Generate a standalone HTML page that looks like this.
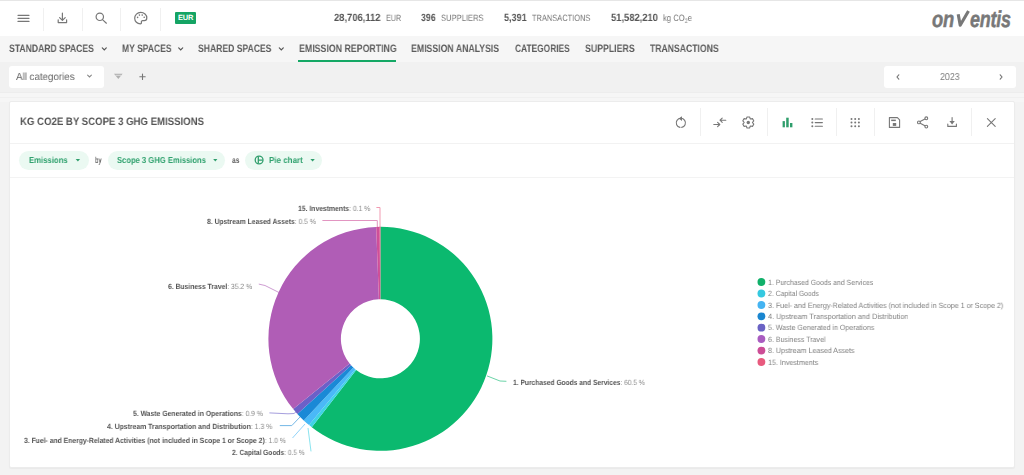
<!DOCTYPE html>
<html><head><meta charset="utf-8">
<style>
*{margin:0;padding:0;box-sizing:border-box}
html,body{width:1024px;height:475px;overflow:hidden;background:#f3f3f3;font-family:"Liberation Sans",sans-serif;text-rendering:geometricPrecision}
.a{position:absolute}
.t{position:absolute;white-space:nowrap;line-height:1;transform-origin:0 0;will-change:transform}
.t b{font-weight:bold}
svg{position:absolute;left:0;top:0}
</style></head><body>
<!-- top bar -->
<div class="a" style="left:0;top:0;width:1024px;height:1px;background:#e6e6e6"></div>
<div class="a" style="left:0;top:1px;width:1024px;height:35px;background:#fff"></div>
<!-- nav bar -->
<div class="a" style="left:0;top:36px;width:1024px;height:26px;background:#f6f6f6"></div>
<div class="a" style="left:298px;top:60px;width:98px;height:2px;background:#14a865"></div>
<!-- filter bar -->
<div class="a" style="left:0;top:62px;width:1024px;height:30px;background:#f1f1f1"></div>
<div class="a" style="left:0;top:91.5px;width:1024px;height:1px;background:#ededed"></div>
<div class="a" style="left:0;top:92.5px;width:1024px;height:10px;background:#f6f6f6"></div>
<div class="a" style="left:0;top:96.5px;width:1024px;height:1px;background:#f0f0f0"></div>
<div class="a" style="left:8.5px;top:66px;width:95px;height:22px;background:#fff;border-radius:3px"></div>
<div class="a" style="left:884px;top:66px;width:132px;height:22px;background:#fff;border-radius:3px"></div>
<!-- card -->
<div class="a" style="left:0;top:102px;width:1024px;height:373px;background:#f3f3f3"></div>
<div class="a" style="left:9px;top:101px;width:1006px;height:367px;background:#fff;border:1px solid #ececec;border-radius:2px;box-shadow:0 1px 1px rgba(0,0,0,0.04)"></div>
<div class="a" style="left:10px;top:143px;width:1004px;height:1px;background:#f2f2f2"></div>
<div class="a" style="left:10px;top:177px;width:1004px;height:1px;background:#f3f3f3"></div>
<!-- EUR badge -->
<div class="a" style="left:175px;top:12px;width:21px;height:12px;background:#15a464;border-radius:1px;color:#fff;font-size:7.5px;font-weight:bold;line-height:12px;text-align:center;letter-spacing:-0.2px">EUR</div>
<!-- pills -->
<div class="a" style="left:18.7px;top:150.5px;width:70.3px;height:19.5px;border-radius:10px;background:#ebf9f2"></div>
<div class="a" style="left:107.6px;top:150.5px;width:117.8px;height:19.5px;border-radius:10px;background:#ebf9f2"></div>
<div class="a" style="left:245.4px;top:150.5px;width:76.8px;height:19.5px;border-radius:10px;background:#ebf9f2"></div>
<svg width="1024" height="475" viewBox="0 0 1024 475">
<g id="topicons" fill="none" stroke="#777" stroke-width="1.2" stroke-linecap="round">
 <!-- hamburger -->
 <path d="M18 15.3H29M18 18.3H29M18 21.4H29"/>
 <!-- download -->
 <path d="M62.4 13.2V20.2M59.6 17.6L62.4 20.4L65.2 17.6M58.2 19.8V22.6H66.6V19.8" stroke-linejoin="round"/>
 <!-- search -->
 <circle cx="99.8" cy="16.8" r="3.7"/><path d="M102.5 19.6L106.4 23.2"/>
 <!-- palette -->
 <path d="M140.7 12.4C137.3 12.4 134.7 15 134.7 18.2C134.7 21.4 137.3 23.8 140.3 23.8C141.3 23.8 141.6 23.2 141.4 22.5C141.1 21.6 141.6 20.6 142.7 20.6H144.3C145.8 20.6 146.8 19.6 146.8 18C146.8 14.9 144.1 12.4 140.7 12.4Z"/>
</g>
<g fill="#777">
 <circle cx="137.6" cy="17.4" r="0.8"/><circle cx="139.4" cy="15.1" r="0.8"/><circle cx="142.2" cy="15.1" r="0.8"/><circle cx="144.2" cy="17.2" r="0.8"/>
</g>
<g stroke="#f0f0f0" stroke-width="1">
 <path d="M43.5 8V31M82.5 8V31M120.5 8V31M160.5 8V31"/>
 <path d="M700.5 108V136M767.5 108V136M836.5 108V136M874.5 108V136M971.5 108V136"/>
</g>
<!-- nav chevrons -->
<g fill="none" stroke="#666" stroke-width="1" stroke-linecap="round">
 <path d="M102.3 47.8L104.3 49.8L106.3 47.8M178.7 47.8L180.7 49.8L182.7 47.8M279.3 47.8L281.3 49.8L283.3 47.8" stroke-width="1.2" stroke="#555"/>
 <path d="M87.6 75.2L89.5 77L91.4 75.2" stroke="#888" stroke-width="1.1"/>
 <path d="M898.8 74.8L897 77L898.8 79.2M1000.2 74.8L1002 77L1000.2 79.2" stroke="#777" stroke-width="1.1"/>
 <path d="M142.5 74V79.4M139.8 76.7H145.2" stroke="#777" stroke-width="1.1"/>
</g>
<path d="M114 73.8H122.6L118.3 79Z" fill="#b0b0b0"/>
<path d="M115.5 75.3H121.1" stroke="#fff" stroke-width="0.6"/>
<!-- pill carets -->
<g fill="#2f9e6c">
 <path d="M75.7 159H80.1L77.9 161.4Z"/>
 <path d="M213.2 159H217.4L215.3 161.4Z"/>
 <path d="M310.4 159H314.8L312.6 161.4Z"/>
</g>
<g fill="none" stroke="#2f9e6c" stroke-width="1.3">
 <circle cx="259.1" cy="160" r="3.9"/>
 <path d="M258.3 156.6V163.3M258.3 160.1H262.7"/>
</g>
<!-- card toolbar icons -->
<g fill="none" stroke="#777" stroke-width="1.1" stroke-linecap="round" stroke-linejoin="round">
 <!-- refresh -->
 <path d="M680 127.4A4.6 4.6 0 1 1 681.7 127.4"/>
 <!-- compress arrows -->
 <path d="M713.8 124.5H719.6M717.6 122.4L719.8 124.5L717.6 126.6"/>
 <path d="M725.8 120.2H720.2M722.2 118.1L720 120.2L722.2 122.3"/>
 <!-- gear -->
 <path d="M746.25 118.95L747.02 116.95L749.58 116.95L750.35 118.95L752.47 118.61L753.75 120.83L752.40 122.50L753.75 124.17L752.47 126.39L750.35 126.05L749.58 128.05L747.02 128.05L746.25 126.05L744.13 126.39L742.85 124.17L744.20 122.50L742.85 120.83L744.13 118.61Z"/>
 <!-- list -->
 <path d="M815.2 119H822.4M815.2 122.6H822.4M815.2 126.2H822.4"/>
 <!-- save -->
 <path d="M889.4 117.6H897.4L899.6 119.8V127.4H889.4Z"/>

 <!-- share -->
 <path d="M920.2 121.6L924.9 119.1M920.2 123.3L924.9 125.8"/>
 <circle cx="918.9" cy="122.4" r="1.4"/><circle cx="926.3" cy="118.3" r="1.4"/><circle cx="926.3" cy="126.6" r="1.4"/>
 <!-- download -->
 <path d="M952.1 117.6V122M947.8 124V126.4H956.4V124"/>
 <!-- close -->
 <path d="M987.4 118.6L995.2 126.4M995.2 118.6L987.4 126.4"/>
</g>
<g fill="#777">
 <circle cx="686.4" cy="120.6" r="0"/>
 <circle cx="748.3" cy="122.5" r="1.7"/><path d="M682 116.3V120.9L678.7 118.6Z"/>
 <path d="M949.4 121H954.8L952.1 124.6Z"/><rect x="891.2" y="119.6" width="4.6" height="1.5"/><rect x="892.8" y="123" width="3.4" height="2.9"/>
 
 <circle cx="812.3" cy="119" r="1"/><circle cx="812.3" cy="122.6" r="1"/><circle cx="812.3" cy="126.2" r="1"/>
 <circle cx="851.5" cy="119" r="1"/><circle cx="855.2" cy="119" r="1"/><circle cx="858.9" cy="119" r="1"/>
 <circle cx="851.5" cy="122.6" r="1"/><circle cx="855.2" cy="122.6" r="1"/><circle cx="858.9" cy="122.6" r="1"/>
 <circle cx="851.5" cy="126.2" r="1"/><circle cx="855.2" cy="126.2" r="1"/><circle cx="858.9" cy="126.2" r="1"/>
</g>
<g fill="#2f9e6c">
 <rect x="782.6" y="121.1" width="2.3" height="6.2"/>
 <rect x="786.2" y="117.7" width="2.5" height="9.6"/>
 <rect x="790" y="123" width="2.4" height="4.3"/>
</g>
<!-- donut -->
<g>
<path d="M380.40 226.80A112.0 112.0 0 1 1 311.75 427.30L356.19 370.01A39.5 39.5 0 1 0 380.40 299.30Z" fill="#0bb96f"/>
<path d="M311.75 427.30A112.0 112.0 0 0 1 309.01 425.10L355.22 369.24A39.5 39.5 0 0 0 356.19 370.01Z" fill="#3fd3e6"/>
<path d="M309.01 425.10A112.0 112.0 0 0 1 303.73 420.44L353.36 367.59A39.5 39.5 0 0 0 355.22 369.24Z" fill="#4ab9f7"/>
<path d="M303.73 420.44A112.0 112.0 0 0 1 297.32 413.92L351.10 365.29A39.5 39.5 0 0 0 353.36 367.59Z" fill="#1a89d6"/>
<path d="M297.32 413.92A112.0 112.0 0 0 1 293.21 409.10L349.65 363.59A39.5 39.5 0 0 0 351.10 365.29Z" fill="#6c60c8"/>
<path d="M293.21 409.10A112.0 112.0 0 0 1 376.18 226.88L378.91 299.33A39.5 39.5 0 0 0 349.65 363.59Z" fill="#b05db6"/>
<path d="M376.18 226.88A112.0 112.0 0 0 1 379.70 226.80L380.15 299.30A39.5 39.5 0 0 0 378.91 299.33Z" fill="#cf4f98"/>
<path d="M379.70 226.80A112.0 112.0 0 0 1 380.40 226.80L380.40 299.30A39.5 39.5 0 0 0 380.15 299.30Z" fill="#ea5a80"/>
</g>
<g opacity="0.6">
<polyline points="376.4,207.5 380,207.5 380,228" fill="none" stroke="#ea5a80" stroke-width="1"/>
<polyline points="322.4,220.5 377.3,220.5 377.3,228" fill="none" stroke="#cf4f98" stroke-width="1"/>
<polyline points="258.8,284.1 265,285.5 279,292.5" fill="none" stroke="#b05db6" stroke-width="1"/>
<polyline points="269.4,412.9 288,413.8 294,413.5 297,411" fill="none" stroke="#6c60c8" stroke-width="1"/>
<polyline points="279.8,425.6 291.8,425.6 300,417" fill="none" stroke="#1a89d6" stroke-width="1"/>
<polyline points="292.5,438 305,424" fill="none" stroke="#4ab9f7" stroke-width="1"/>
<polyline points="311,451.4 308,428" fill="none" stroke="#3fd3e6" stroke-width="1"/>
<polyline points="506.4,381.3 500,381 487,375.9" fill="none" stroke="#0bb96f" stroke-width="1"/>
</g>
<!-- legend markers -->
<g>
<circle cx="761.4" cy="282.0" r="3.9" fill="#10b06a"/>
<circle cx="761.4" cy="293.5" r="3.9" fill="#35c9e0"/>
<circle cx="761.4" cy="305.0" r="3.9" fill="#45b4f2"/>
<circle cx="761.4" cy="316.3" r="3.9" fill="#1a86d0"/>
<circle cx="761.4" cy="327.7" r="3.9" fill="#6a62c4"/>
<circle cx="761.4" cy="339.0" r="3.9" fill="#a95cc0"/>
<circle cx="761.4" cy="350.6" r="3.9" fill="#cc4d96"/>
<circle cx="761.4" cy="362.0" r="3.9" fill="#e85a7e"/>
</g>
</svg>
<!-- logo -->
<div class="a" style="white-space:nowrap;line-height:1;left:932.2px;top:7.8px;font-size:23px;font-weight:bold;font-style:italic;color:#787878;letter-spacing:-0.3px;transform:scaleX(0.80);transform-origin:0 0;-webkit-text-stroke:0.5px #787878">on</div>
<div class="a" style="white-space:nowrap;line-height:1;left:970.2px;top:7.8px;font-size:23px;font-weight:bold;font-style:italic;color:#787878;letter-spacing:-0.3px;transform:scaleX(0.78);transform-origin:0 0;-webkit-text-stroke:0.5px #787878">entis</div>
<svg width="1024" height="40" style="position:absolute;left:0;top:0"><path d="M958.2 14.2L960.2 25.3L968.5 11.0" fill="none" stroke="#787878" stroke-width="3.1" stroke-linejoin="round" stroke-linecap="butt"/></svg>
<div id="t0" class="t" style="left:333.60px;top:14.10px;font-size:10.47px;font-weight:bold;color:#555;transform:scaleX(0.8953);">28,706,112</div>
<div id="t1" class="t" style="left:385.60px;top:14.10px;font-size:9.16px;font-weight:normal;color:#777;transform:scaleX(0.7858);">EUR</div>
<div id="t2" class="t" style="left:421.00px;top:14.10px;font-size:10.47px;font-weight:bold;color:#555;transform:scaleX(0.8358);">396</div>
<div id="t3" class="t" style="left:441.00px;top:14.10px;font-size:9.16px;font-weight:normal;color:#777;transform:scaleX(0.8287);">SUPPLIERS</div>
<div id="t4" class="t" style="left:503.60px;top:14.10px;font-size:10.47px;font-weight:bold;color:#555;transform:scaleX(0.8625);">5,391</div>
<div id="t5" class="t" style="left:532.30px;top:14.10px;font-size:9.16px;font-weight:normal;color:#777;transform:scaleX(0.8141);">TRANSACTIONS</div>
<div id="t6" class="t" style="left:610.50px;top:14.10px;font-size:10.47px;font-weight:bold;color:#555;transform:scaleX(0.8949);">51,582,210</div>
<div id="t7" class="t" style="left:662.80px;top:14.10px;font-size:9.16px;font-weight:normal;color:#777;transform:scaleX(0.8375);">kg CO<span style="font-size:70%;vertical-align:-2px">2</span>e</div>
<div id="t8" class="t" style="left:9.40px;top:43.60px;font-size:10.76px;font-weight:bold;color:#5c5c5c;transform:scaleX(0.8015);">STANDARD SPACES</div>
<div id="t9" class="t" style="left:121.50px;top:43.60px;font-size:10.76px;font-weight:bold;color:#5c5c5c;transform:scaleX(0.7942);">MY SPACES</div>
<div id="t10" class="t" style="left:197.90px;top:43.60px;font-size:10.76px;font-weight:bold;color:#5c5c5c;transform:scaleX(0.7996);">SHARED SPACES</div>
<div id="t11" class="t" style="left:298.50px;top:43.60px;font-size:10.76px;font-weight:bold;color:#5c5c5c;transform:scaleX(0.8186);">EMISSION REPORTING</div>
<div id="t12" class="t" style="left:411.30px;top:43.60px;font-size:10.76px;font-weight:bold;color:#5c5c5c;transform:scaleX(0.8117);">EMISSION ANALYSIS</div>
<div id="t13" class="t" style="left:515.00px;top:43.60px;font-size:10.76px;font-weight:bold;color:#5c5c5c;transform:scaleX(0.7783);">CATEGORIES</div>
<div id="t14" class="t" style="left:584.80px;top:43.60px;font-size:10.76px;font-weight:bold;color:#5c5c5c;transform:scaleX(0.8156);">SUPPLIERS</div>
<div id="t15" class="t" style="left:650.00px;top:43.60px;font-size:10.76px;font-weight:bold;color:#5c5c5c;transform:scaleX(0.8044);">TRANSACTIONS</div>
<div id="t16" class="t" style="left:16.40px;top:72.90px;font-size:10.32px;font-weight:normal;color:#666;transform:scaleX(0.9466);">All categories</div>
<div id="t17" class="t" style="left:939.80px;top:72.70px;font-size:10.03px;font-weight:normal;color:#7a7a7a;transform:scaleX(0.8797);">2023</div>
<div id="t18" class="t" style="left:19.80px;top:117.10px;font-size:10.76px;font-weight:bold;color:#555;transform:scaleX(0.8936);">KG CO2E BY SCOPE 3 GHG EMISSIONS</div>
<div id="t19" class="t" style="left:29.20px;top:156.00px;font-size:8.72px;font-weight:bold;color:#31a26f;transform:scaleX(0.8871);">Emissions</div>
<div id="t20" class="t" style="left:95.10px;top:156.00px;font-size:8.72px;font-weight:bold;color:#666;transform:scaleX(0.6479);">by</div>
<div id="t21" class="t" style="left:116.80px;top:156.00px;font-size:8.72px;font-weight:bold;color:#31a26f;transform:scaleX(0.8736);">Scope 3 GHG Emissions</div>
<div id="t22" class="t" style="left:232.00px;top:156.00px;font-size:8.72px;font-weight:bold;color:#666;transform:scaleX(0.7729);">as</div>
<div id="t23" class="t" style="left:268.50px;top:156.00px;font-size:8.72px;font-weight:bold;color:#31a26f;transform:scaleX(0.9174);">Pie chart</div>
<div id="t24" class="t" style="left:298.00px;top:205.40px;font-size:7.60px;font-weight:normal;color:#555;transform:scaleX(0.8967);"><b>15. Investments</b><span style="color:#8a8a8a">: 0.1 %</span></div>
<div id="t25" class="t" style="left:207.00px;top:218.10px;font-size:7.60px;font-weight:normal;color:#555;transform:scaleX(0.8908);"><b>8. Upstream Leased Assets</b><span style="color:#8a8a8a">: 0.5 %</span></div>
<div id="t26" class="t" style="left:167.60px;top:282.70px;font-size:7.60px;font-weight:normal;color:#555;transform:scaleX(0.8932);"><b>6. Business Travel</b><span style="color:#8a8a8a">: 35.2 %</span></div>
<div id="t27" class="t" style="left:132.70px;top:410.00px;font-size:7.60px;font-weight:normal;color:#555;transform:scaleX(0.8964);"><b>5. Waste Generated in Operations</b><span style="color:#8a8a8a">: 0.9 %</span></div>
<div id="t28" class="t" style="left:107.10px;top:422.90px;font-size:7.60px;font-weight:normal;color:#555;transform:scaleX(0.9041);"><b>4. Upstream Transportation and Distribution</b><span style="color:#8a8a8a">: 1.3 %</span></div>
<div id="t29" class="t" style="left:24.40px;top:436.60px;font-size:7.60px;font-weight:normal;color:#555;transform:scaleX(0.8950);"><b>3. Fuel- and Energy-Related Activities (not included in Scope 1 or Scope 2)</b><span style="color:#8a8a8a">: 1.0 %</span></div>
<div id="t30" class="t" style="left:232.30px;top:449.30px;font-size:7.60px;font-weight:normal;color:#555;transform:scaleX(0.8700);"><b>2. Capital Goods</b><span style="color:#8a8a8a">: 0.5 %</span></div>
<div id="t31" class="t" style="left:513.40px;top:379.20px;font-size:7.60px;font-weight:normal;color:#555;transform:scaleX(0.8770);"><b>1. Purchased Goods and Services</b><span style="color:#8a8a8a">: 60.5 %</span></div>
<div id="t32" class="t" style="left:768.40px;top:278.70px;font-size:7.60px;font-weight:normal;color:#808080;transform:scaleX(0.9128);">1. Purchased Goods and Services</div>
<div id="t33" class="t" style="left:768.40px;top:290.20px;font-size:7.60px;font-weight:normal;color:#808080;transform:scaleX(0.9014);">2. Capital Goods</div>
<div id="t34" class="t" style="left:768.40px;top:301.70px;font-size:7.60px;font-weight:normal;color:#808080;transform:scaleX(0.9333);">3. Fuel- and Energy-Related Activities (not included in Scope 1 or Scope 2)</div>
<div id="t35" class="t" style="left:768.40px;top:313.00px;font-size:7.60px;font-weight:normal;color:#808080;transform:scaleX(0.9551);">4. Upstream Transportation and Distribution</div>
<div id="t36" class="t" style="left:768.40px;top:324.40px;font-size:7.60px;font-weight:normal;color:#808080;transform:scaleX(0.9239);">5. Waste Generated in Operations</div>
<div id="t37" class="t" style="left:768.40px;top:335.70px;font-size:7.60px;font-weight:normal;color:#808080;transform:scaleX(0.9267);">6. Business Travel</div>
<div id="t38" class="t" style="left:768.40px;top:347.30px;font-size:7.60px;font-weight:normal;color:#808080;transform:scaleX(0.9314);">8. Upstream Leased Assets</div>
<div id="t39" class="t" style="left:768.40px;top:358.70px;font-size:7.60px;font-weight:normal;color:#808080;transform:scaleX(0.9383);">15. Investments</div>
</body></html>
